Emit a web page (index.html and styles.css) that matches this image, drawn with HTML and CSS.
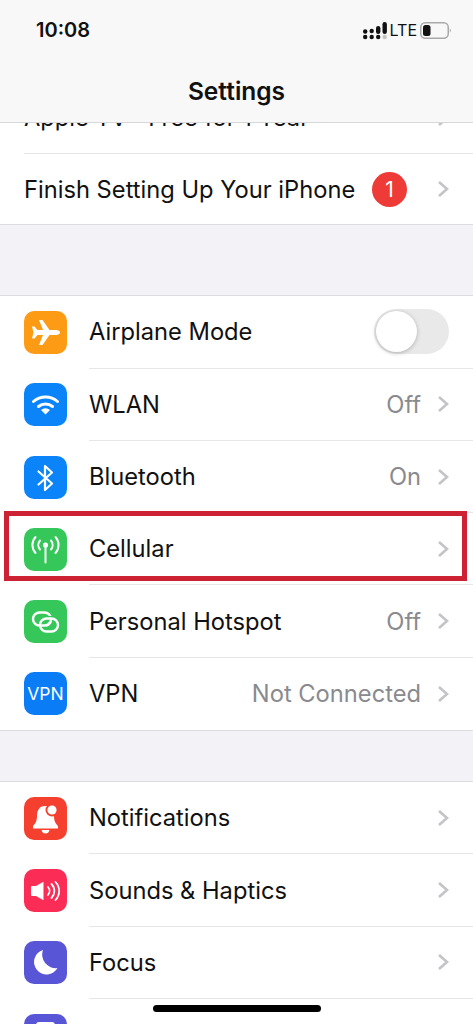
FILE: index.html
```html
<!DOCTYPE html>
<html lang="en">

<head>
    <meta charset="UTF-8">
    <meta name="viewport" content="width=device-width, initial-scale=1.0">
    <title>Settings</title>
    <link rel="stylesheet" href="styles.css">
</head>

<body>

    <header class="top-bar">
        <div class="status-bar">
            <span class="time">10:08</span>
            <div class="status-icons">
                <svg class="signal" width="24" height="20" viewBox="0 0 24 20">
                    <circle cx="2.2" cy="11.5" r="2.2" fill="#111" />
                    <circle cx="2.2" cy="17" r="2.2" fill="#111" />
                    <circle cx="8.7" cy="11" r="2.2" fill="#111" />
                    <circle cx="8.7" cy="17" r="2.2" fill="#111" />
                    <rect x="13" y="6" width="4.4" height="8" rx="2.2" fill="#111" />
                    <circle cx="15.2" cy="17" r="2.2" fill="#111" />
                    <rect x="19.5" y="2" width="4.4" height="12" rx="2.2" fill="#111" />
                    <circle cx="21.7" cy="17" r="2.2" fill="#c4c4c4" />
                </svg>
                <span class="lte">LTE</span>
                <svg class="battery" width="31" height="17" viewBox="0 0 31 17">
                    <rect x="0.75" y="0.75" width="27.5" height="15.5" rx="4.5" fill="none" stroke="#a9a9a9" stroke-width="1.5" />
                    <rect x="3" y="3" width="7.5" height="11" rx="2.5" fill="#111" />
                    <path d="M29.8 6.5 C30.6 7 30.9 7.7 30.9 8.5 C30.9 9.3 30.6 10 29.8 10.5 Z" fill="#a9a9a9" />
                </svg>
            </div>
        </div>
        <div class="nav-title">Settings</div>
    </header>

    <main class="settings">

        <section class="group group-first">
            <div class="row">
                <div class="row-body">
                    <span class="label">Apple TV+ Free for 1 Year</span>
                    <svg class="chevron" width="12" height="18" viewBox="0 0 12 18">
                        <path d="M2 2 L10 9 L2 16" />
                    </svg>
                </div>
            </div>
            <div class="row row-short">
                <div class="row-body row-body-flush">
                    <span class="label">Finish Setting Up Your iPhone</span>
                    <span class="badge">1</span>
                    <svg class="chevron" width="12" height="18" viewBox="0 0 12 18">
                        <path d="M2 2 L10 9 L2 16" />
                    </svg>
                </div>
            </div>
        </section>

        <section class="group group-second">
            <div class="row">
                <div class="icon icon-orange">
                    <svg width="43" height="43" viewBox="0 0 43 43">
                        <path fill="#fff" d="M36 21.5 C36 19.5 33 19 31 19 L25.5 19 L18.5 9 L15 9 L19 19 L13.5 19 L10.5 15.5 L8 15.5 L9.5 21.5 L8 27.5 L10.5 27.5 L13.5 24 L19 24 L15 34 L18.5 34 L25.5 24 L31 24 C33 24 36 23.5 36 21.5 Z" />
                    </svg>
                </div>
                <div class="row-body">
                    <span class="label">Airplane Mode</span>
                    <div class="toggle"><div class="knob"></div></div>
                </div>
            </div>
            <div class="row">
                <div class="icon icon-blue">
                    <svg width="43" height="43" viewBox="0 0 43 43" fill="none" stroke="#fff" stroke-width="3" stroke-linecap="round">
                        <path d="M9.5 18.5 A18 18 0 0 1 33.5 18.5" />
                        <path d="M14.5 23.5 A11 11 0 0 1 28.5 23.5" />
                        <path fill="#fff" stroke="none" d="M21.5 31.5 L17 27 A7 7 0 0 1 26 27 Z" />
                    </svg>
                </div>
                <div class="row-body">
                    <span class="label">WLAN</span>
                    <span class="value">Off</span>
                    <svg class="chevron" width="12" height="18" viewBox="0 0 12 18">
                        <path d="M2 2 L10 9 L2 16" />
                    </svg>
                </div>
            </div>
            <div class="row">
                <div class="icon icon-blue">
                    <svg width="43" height="43" viewBox="0 0 43 43" fill="none" stroke="#fff" stroke-width="2.2" stroke-linejoin="round" stroke-linecap="round">
                        <path d="M14.5 15.5 L28 27.5 L21 34 L21 10 L28 16.5 L14.5 28.5" />
                    </svg>
                </div>
                <div class="row-body">
                    <span class="label">Bluetooth</span>
                    <span class="value">On</span>
                    <svg class="chevron" width="12" height="18" viewBox="0 0 12 18">
                        <path d="M2 2 L10 9 L2 16" />
                    </svg>
                </div>
            </div>
            <div class="row">
                <div class="highlight"></div>
                <div class="icon icon-green">
                    <svg width="43" height="43" viewBox="0 0 43 43" fill="none" stroke="#fff" stroke-width="2" stroke-linecap="round">
                        <path d="M16 12.5 A7 7 0 0 0 16 21.5" />
                        <path d="M11.5 9 A12 12 0 0 0 11.5 25" />
                        <path d="M27 12.5 A7 7 0 0 1 27 21.5" />
                        <path d="M31.5 9 A12 12 0 0 1 31.5 25" />
                        <circle cx="21.5" cy="17" r="2.6" fill="#fff" stroke="none" />
                        <path d="M21.5 18 L21.5 34.5" />
                    </svg>
                </div>
                <div class="row-body">
                    <span class="label">Cellular</span>
                    <svg class="chevron" width="12" height="18" viewBox="0 0 12 18">
                        <path d="M2 2 L10 9 L2 16" />
                    </svg>
                </div>
            </div>
            <div class="row">
                <div class="icon icon-green">
                    <svg width="43" height="43" viewBox="0 0 43 43" fill="none" stroke="#fff" stroke-width="2.4">
                        <rect x="9" y="12.5" width="18" height="13" rx="6.5" />
                        <path stroke="#35c759" stroke-width="5" d="M22 18.5 L27.5 18.5 A6.5 6.5 0 0 1 34 25" />
                        <rect x="16" y="18.5" width="18" height="13" rx="6.5" />
                        <path stroke-width="2.4" d="M27 19 A6.5 6.5 0 0 1 22 25.5" />
                    </svg>
                </div>
                <div class="row-body">
                    <span class="label">Personal Hotspot</span>
                    <span class="value">Off</span>
                    <svg class="chevron" width="12" height="18" viewBox="0 0 12 18">
                        <path d="M2 2 L10 9 L2 16" />
                    </svg>
                </div>
            </div>
            <div class="row">
                <div class="icon icon-vpn">VPN</div>
                <div class="row-body row-body-flush">
                    <span class="label">VPN</span>
                    <span class="value">Not Connected</span>
                    <svg class="chevron" width="12" height="18" viewBox="0 0 12 18">
                        <path d="M2 2 L10 9 L2 16" />
                    </svg>
                </div>
            </div>
        </section>

        <section class="group group-third">
            <div class="row">
                <div class="icon icon-red">
                    <svg width="43" height="43" viewBox="0 0 43 43">
                        <path fill="#fff" d="M21 9 C15 9 13 14 13 19 C13 24 11.5 26.5 9 29 L9 31.5 L34 31.5 L34 29 C31.5 26.5 30 24 30 19 C30 14 27 9 21 9 Z" />
                        <path fill="#fff" d="M17.5 33 L25.5 33 C25 35.5 23.5 36.5 21.5 36.5 C19.5 36.5 18 35.5 17.5 33 Z" />
                        <circle cx="28" cy="13" r="6.5" fill="#f6402f" />
                        <circle cx="28" cy="13" r="4.6" fill="#fff" />
                    </svg>
                </div>
                <div class="row-body">
                    <span class="label">Notifications</span>
                    <svg class="chevron" width="12" height="18" viewBox="0 0 12 18">
                        <path d="M2 2 L10 9 L2 16" />
                    </svg>
                </div>
            </div>
            <div class="row">
                <div class="icon icon-pink">
                    <svg width="43" height="43" viewBox="0 0 43 43" fill="none" stroke="#fff" stroke-width="1.8" stroke-linecap="round">
                        <path fill="#fff" stroke="none" d="M7 18 C7 17.5 7.5 17 8 17 L12 17 L19 13 L19.5 13 L19.5 31 L19 31 L12 27 L8 27 C7.5 27 7 26.5 7 26 Z" />
                        <path d="M24 18 A6 6 0 0 1 24 26" />
                        <path d="M27.5 15 A10 10 0 0 1 27.5 29" />
                        <path d="M31.5 13 A13 13 0 0 1 31.5 31" />
                    </svg>
                </div>
                <div class="row-body">
                    <span class="label">Sounds &amp; Haptics</span>
                    <svg class="chevron" width="12" height="18" viewBox="0 0 12 18">
                        <path d="M2 2 L10 9 L2 16" />
                    </svg>
                </div>
            </div>
            <div class="row">
                <div class="icon icon-purple">
                    <svg width="43" height="43" viewBox="0 0 43 43">
                        <path fill="#fff" d="M19 9 A12.5 12.5 0 1 0 33.5 27 A13.5 13.5 0 0 1 19 9 Z" />
                    </svg>
                </div>
                <div class="row-body">
                    <span class="label">Focus</span>
                    <svg class="chevron" width="12" height="18" viewBox="0 0 12 18">
                        <path d="M2 2 L10 9 L2 16" />
                    </svg>
                </div>
            </div>
            <div class="row">
                <div class="icon icon-purple">
                    <svg width="43" height="43" viewBox="0 0 43 43">
                        <rect x="12" y="8" width="19" height="28" rx="3" fill="#fff" />
                    </svg>
                </div>
                <div class="row-body"></div>
            </div>
        </section>

    </main>

    <div class="home-indicator"></div>

</body>

</html>
```

FILE: styles.css
```css
* {
    box-sizing: border-box;
}

html,
body {
    margin: 0;
    height: 1024px;
    overflow: hidden;
}

body {
    font-family: Inter, "Liberation Sans", sans-serif;
    background-color: #f2f2f7;
    color: #111;
}

.top-bar {
    position: absolute;
    top: 0;
    left: 0;
    width: 100%;
    height: 123px;
    z-index: 2;
    background-color: #f8f8f8;
    border-bottom: 1px solid #d8d8da;
}

.status-bar {
    display: flex;
    justify-content: space-between;
    align-items: center;
    height: 60px;
    padding: 0 22px 0 36px;
}

.time {
    font-size: 20px;
    font-weight: 600;
}

.status-icons {
    display: flex;
    align-items: center;
    gap: 3px;
}

.lte {
    font-size: 16px;
}

.nav-title {
    text-align: center;
    font-size: 24.5px;
    font-weight: 600;
    line-height: 62px;
}

.settings {
    padding-top: 82px;
}

.group {
    background-color: white;
    border-top: 1px solid #dcdce0;
    border-bottom: 1px solid #dcdce0;
}

.group-first {
    border-top: none;
}

.group-second {
    margin-top: 70px;
}

.group-third {
    margin-top: 50px;
}

.row {
    position: relative;
    display: flex;
    align-items: center;
    height: 72.3px;
    padding-left: 24px;
}

.row-short {
    height: 70px;
}

.row-body {
    flex: 1;
    display: flex;
    align-items: center;
    height: 100%;
    margin-left: 22px;
    padding-right: 24px;
    border-bottom: 1px solid #e5e5ea;
}

.group-first .row-body {
    margin-left: 0;
}

.row-body-flush {
    border-bottom: none;
}

.label {
    flex: 1;
    font-size: 23.7px;
}

.value {
    font-size: 23.7px;
    color: #8a8a8e;
    margin-right: 16px;
}

.chevron {
    fill: none;
    stroke: #c4c4c7;
    stroke-width: 2.6;
}

.icon {
    flex: none;
    width: 43px;
    height: 43px;
    border-radius: 10px;
    overflow: hidden;
}

.icon svg {
    display: block;
}

.icon-orange {
    background-color: #fe9b14;
}

.icon-blue {
    background-color: #0a84f8;
}

.icon-green {
    background-color: #35c759;
}

.icon-red {
    background-color: #f6402f;
}

.icon-pink {
    background-color: #fb2c55;
}

.icon-purple {
    background-color: #5856d6;
}

.icon-vpn {
    background-color: #0a7cf6;
    color: white;
    font-size: 17.5px;
    line-height: 43px;
    text-align: center;
}

.badge {
    width: 35px;
    height: 35px;
    margin-right: 30px;
    border-radius: 50%;
    background-color: #ee3b37;
    color: white;
    font-size: 21px;
    line-height: 35px;
    text-align: center;
}

.toggle {
    width: 75px;
    height: 45px;
    padding: 2px;
    border-radius: 23px;
    background-color: #e9e9ea;
}

.knob {
    width: 41px;
    height: 41px;
    border-radius: 50%;
    background-color: white;
    box-shadow: 0 1px 4px rgba(0, 0, 0, 0.25);
}

.highlight {
    position: absolute;
    top: -2px;
    left: 4px;
    width: 463px;
    height: 70px;
    z-index: 1;
    border: 5px solid #cc2233;
}

.home-indicator {
    position: absolute;
    left: 153px;
    top: 1005px;
    width: 168px;
    height: 7px;
    z-index: 2;
    border-radius: 4px;
    background-color: black;
}
```
